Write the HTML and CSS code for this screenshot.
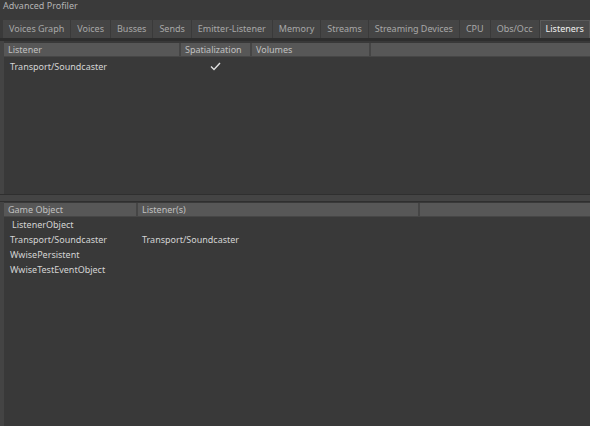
FILE: index.html
```html
<!DOCTYPE html>
<html>
<head>
<meta charset="utf-8">
<link rel="stylesheet" href="styles.css">
</head>
<body>
<div class="app">
  <div class="title">Advanced Profiler</div>
  <div class="tabs">
    <div class="tab">Voices Graph</div>
    <div class="tab">Voices</div>
    <div class="tab">Busses</div>
    <div class="tab">Sends</div>
    <div class="tab">Emitter-Listener</div>
    <div class="tab">Memory</div>
    <div class="tab">Streams</div>
    <div class="tab">Streaming Devices</div>
    <div class="tab">CPU</div>
    <div class="tab">Obs/Occ</div>
    <div class="tab active">Listeners</div>
  </div>
  <div class="content">
    <div class="panel top">
      <div class="header">
        <div class="col c-listener">Listener</div>
        <div class="col c-spat">Spatialization</div>
        <div class="col c-vol">Volumes</div>
        <div class="col c-rest"></div>
      </div>
      <div class="row">
        <div class="cell c-listener">Transport/Soundcaster</div>
        <div class="cell c-spat check">
          <svg width="11" height="9" viewBox="0 0 11 9"><path d="M1 4.5 L4 7.5 L10 1" fill="none" stroke="#e0e0e0" stroke-width="1.4"/></svg>
        </div>
      </div>
    </div>
    <div class="splitter"></div>
    <div class="panel bottom">
      <div class="header">
        <div class="col c-go">Game Object</div>
        <div class="col c-ls">Listener(s)</div>
        <div class="col c-rest"></div>
      </div>
      <div class="rows">
        <div class="row"><div class="cell c-go indent">ListenerObject</div></div>
        <div class="row"><div class="cell c-go">Transport/Soundcaster</div><div class="cell c-ls">Transport/Soundcaster</div></div>
        <div class="row"><div class="cell c-go">WwisePersistent</div></div>
        <div class="row"><div class="cell c-go">WwiseTestEventObject</div></div>
      </div>
    </div>
  </div>
</div>
</body>
</html>
```

FILE: styles.css
```css
html, body {
  margin: 0;
  padding: 0;
  background: #3a3a3a;
}
.app {
  width: 590px;
  height: 426px;
  overflow: hidden;
  display: flex;
  flex-direction: column;
  font-family: "Noto Sans", "Open Sans", sans-serif;
  font-size: 9px;
  color: #c8c8c8;
}
.title {
  height: 14px;
  line-height: 12px;
  padding-left: 3px;
  color: #b4b4b4;
}
.tabs {
  display: flex;
  margin-top: 6px;
  padding-left: 3px;
  height: 18px;
}
.tab {
  background: #454545;
  color: #a8a8a8;
  padding: 0 6px;
  line-height: 18px;
  margin-right: 1px;
  white-space: nowrap;
}
.tab.active {
  flex: 1;
  margin-right: 0;
  background: #4a4a4a;
  color: #f0f0f0;
  box-shadow: inset 1px 1px 0 #5a5a5a, inset -1px 0 0 #5a5a5a;
}
.content {
  flex: 1;
  display: flex;
  flex-direction: column;
  border-top: 3px solid #2e2e2e;
  background: #444444;
  padding-left: 4px;
}
.panel {
  background: #393939;
  display: flex;
  flex-direction: column;
}
.panel.top {
  height: 151px;
  padding-top: 2px;
}
.panel.bottom {
  flex: 1;
  padding-top: 1px;
}
.splitter {
  height: 6px;
  background: #444444;
  border-top: 1px solid #2f2f2f;
  border-bottom: 1px solid #2f2f2f;
  margin-left: -4px;
}
.header {
  display: flex;
  height: 13px;
  background: #575757;
  border-bottom: 1px solid #464646;
  color: #c0c0c0;
}
.col {
  line-height: 13px;
  padding-left: 4px;
  border-right: 2px solid #454545;
  box-sizing: border-box;
  white-space: nowrap;
}
.col.c-rest {
  flex: 1;
  border-right: none;
}
.c-listener { width: 177px; }
.c-spat { width: 71px; }
.c-vol { width: 119px; }
.c-go { width: 134px; }
.c-ls { width: 282px; }
.row {
  display: flex;
  height: 15px;
  line-height: 15px;
}
.top .row { margin-top: 2px; }
.rows { padding-top: 0; }
.cell {
  padding-left: 6px;
  box-sizing: border-box;
  white-space: nowrap;
  color: #d4d4d4;
}
.cell.indent { padding-left: 8px; }
.cell.c-ls { padding-left: 4px; }
.check {
  display: flex;
  align-items: center;
  justify-content: center;
  padding-left: 0;
  padding-right: 2px;
}
```
